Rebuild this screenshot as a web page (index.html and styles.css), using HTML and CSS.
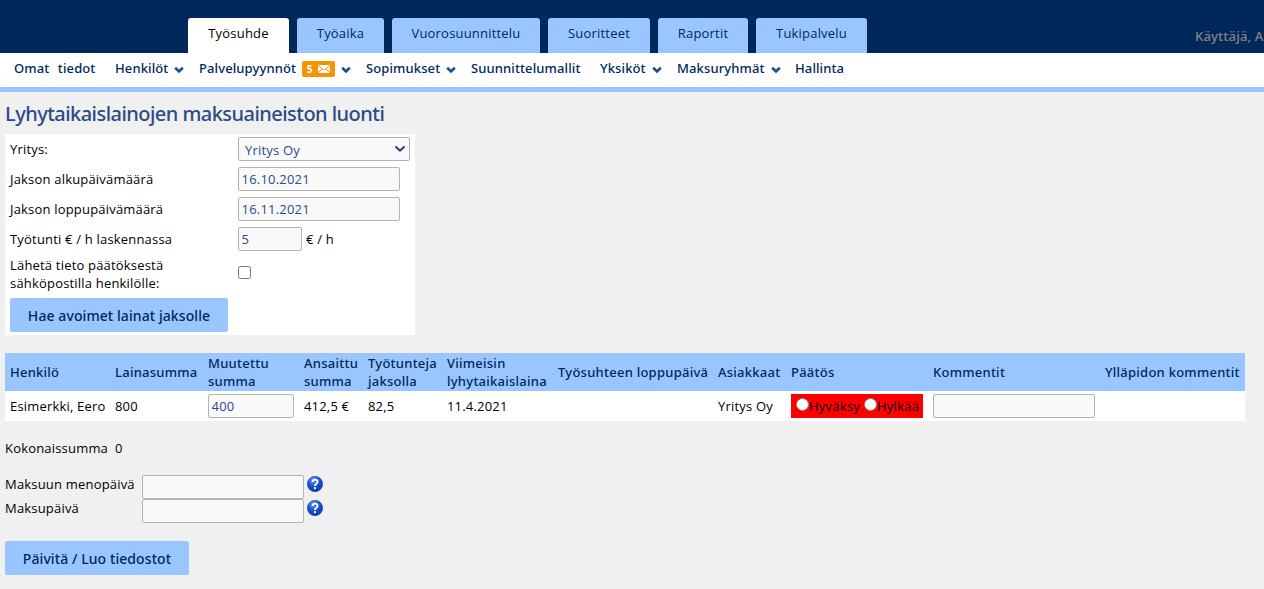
FILE: index.html
```html
<!DOCTYPE html>
<html lang="fi">
<head>
<meta charset="utf-8">
<title>Lyhytaikaislainojen maksuaineiston luonti</title>
<link rel="stylesheet" href="styles.css">
</head>
<body>
<svg class="defs" width="0" height="0">
  <symbol id="chev" viewBox="0 0 10 8"><path d="M1.2 1.800 5 5.500 8.800 1.800" fill="none" stroke="#1d4e89" stroke-width="2.6"/></symbol>
  <radialGradient id="ball" cx=".4" cy=".25" r=".8"><stop offset="0" stop-color="#6f9df0"/><stop offset=".45" stop-color="#1c55d6"/><stop offset="1" stop-color="#0537a8"/></radialGradient>
  <symbol id="help" viewBox="0 0 16 16"><circle cx="8" cy="8" r="7.7" fill="url(#ball)" stroke="#1746ab" stroke-width=".6"/><path d="M5.4 6.1C5.4 2.7 10.8 2.9 10.6 6 10.5 7.8 8 7.8 8 10" fill="none" stroke="#fff" stroke-width="1.9"/><circle cx="8" cy="12.2" r="1.15" fill="#fff"/></symbol>
</svg>
<header class="top">
  <nav class="tabs">
    <a class="tab active">Työsuhde</a><a class="tab t2">Työaika</a><a class="tab t3">Vuorosuunnittelu</a><a class="tab t4">Suoritteet</a><a class="tab t5">Raportit</a><a class="tab t6">Tukipalvelu</a>
  </nav>
  <div class="user">Käyttäjä, A</div>
</header>
<nav class="menu">
  <a class="own">Omat tiedot</a>
  <a>Henkilöt<svg class="chev"><use href="#chev"/></svg></a>
  <a>Palvelupyynnöt<span class="badge">5<svg width="12" height="8" viewBox="0 0 12 8"><path d="M0 0H12V8H0Z" fill="#fff"/><path d="M0 .4 6 5 12 .4M0 7.8 4 4M12 7.8 8 4" fill="none" stroke="#f59300" stroke-width="1"/></svg></span><svg class="chev"><use href="#chev"/></svg></a>
  <a>Sopimukset<svg class="chev"><use href="#chev"/></svg></a>
  <a>Suunnittelumallit</a>
  <a>Yksiköt<svg class="chev"><use href="#chev"/></svg></a>
  <a>Maksuryhmät<svg class="chev"><use href="#chev"/></svg></a>
  <a>Hallinta</a>
</nav>
<main>
  <h1>Lyhytaikaislainojen maksuaineiston luonti</h1>
  <form class="panel">
    <div class="row"><label>Yritys:</label><div class="field select">Yritys Oy<svg width="12" height="8" viewBox="0 0 12 8"><path d="M1.5 1.5 6 5.7 10.500 1.5" fill="none" stroke="#1f4179" stroke-width="2"/></svg></div></div>
    <div class="row"><label>Jakson alkupäivämäärä</label><input class="field" value="16.10.2021"></div>
    <div class="row"><label>Jakson loppupäivämäärä</label><input class="field" value="16.11.2021"></div>
    <div class="row"><label>Työtunti € / h laskennassa</label><input class="field rate" value="5"><span class="unit">€ / h</span></div>
    <div class="row tall"><label>Lähetä tieto päätöksestä sähköpostilla henkilölle:</label><input type="checkbox"></div>
    <button type="button" class="btn fetch">Hae avoimet lainat jaksolle</button>
  </form>
  <table>
    <colgroup><col class="c1"><col class="c2"><col class="c3"><col class="c4"><col class="c5"><col class="c6"><col class="c7"><col class="c8"><col class="c9"><col class="c10"><col class="c11"></colgroup>
    <thead><tr><th>Henkilö</th><th>Lainasumma</th><th>Muutettu<br>summa</th><th>Ansaittu<br>summa</th><th>Työtunteja<br>jaksolla</th><th>Viimeisin<br>lyhytaikaislaina</th><th>Työsuhteen loppupäivä</th><th>Asiakkaat</th><th>Päätös</th><th>Kommentit</th><th>Ylläpidon kommentit</th></tr></thead>
    <tbody><tr><td>Esimerkki, Eero</td><td>800</td><td><input class="field sum" value="400"></td><td>412,5 €</td><td>82,5</td><td>11.4.2021</td><td></td><td>Yritys Oy</td><td><div class="decision"><i class="radio"></i><span class="yes">Hyväksy</span><i class="radio"></i><span>Hylkää</span></div></td><td><input class="field"></td><td></td></tr></tbody>
  </table>
  <div class="total"><span>Kokonaissumma</span><span>0</span></div>
  <div class="dates">
    <div class="date"><label>Maksuun menopäivä</label><input class="field"><svg class="help"><use href="#help"/></svg></div>
    <div class="date"><label>Maksupäivä</label><input class="field"><svg class="help"><use href="#help"/></svg></div>
  </div>
  <button type="button" class="btn save">Päivitä / Luo tiedostot</button>
</main>
</body>
</html>
```
FILE: styles.css
```css
* { box-sizing: border-box; }
body { margin: 0; height: 589px; overflow: hidden; background: #f0f0f0; color: #000; font: 13px/18px "Open Sans", "Noto Sans", sans-serif; letter-spacing: .19px; }
.defs { display: block; height: 0; }
.top { height: 53px; background: #00285a; display: flex; padding: 18px 0 0 188px; overflow: hidden; }
.tabs { display: flex; gap: 8px; width: 1007px; flex: none; }
.tab { height: 35px; width: 101px; background: #9ac6ff; color: #00285a; border-radius: 3px 3px 0 0; text-align: center; line-height: 31px; white-space: nowrap; letter-spacing: .2px; }
.active { background: #fff; color: #000; }
.t2 { width: 87px; }
.t3 { width: 148px; }
.t4 { width: 102px; }
.t5 { width: 90px; }
.t6 { width: 111px; }
.user { color: #808080; font-weight: 600; line-height: 37px; white-space: nowrap; letter-spacing: .1px; }
.menu { height: 39px; background: #fff; border-bottom: 5px solid #9ac6ff; display: grid; grid-template-columns: 101px 84px 167px 105px 129px 77px 118px 100px; padding-left: 14px; color: #00285a; font-family: "Noto Sans", "Open Sans", sans-serif; font-weight: 500; line-height: 31px; letter-spacing: .11px; }
.menu a { display: flex; white-space: nowrap; }
.own { word-spacing: 5px; }
.chev { width: 10px; height: 8px; margin: 13px 0 0 6px; }
.badge { width: 33px; height: 16px; margin: 8px 0 0 5.5px; background: #f59300; color: #fff; border-radius: 2px; font-size: 10px; font-weight: 700; line-height: 17px; display: flex; align-items: center; gap: 5px; padding-left: 5px; }
main { padding: 11px 0 0 5px; }
h1 { margin: 0; height: 31px; font-family: "Noto Sans", "Open Sans", sans-serif; font-size: 20px; line-height: 21px; font-weight: 500; color: #2a4b87; letter-spacing: -.54px; white-space: nowrap; }
.panel { width: 410px; height: 201px; background: #fff; padding: 0 5px; }
.row { height: 30px; display: flex; align-items: center; }
.row label { width: 228px; padding-right: 50px; flex: none; }
.tall { height: 44px; padding-bottom: 4px; }
.tall + .btn { display: block; }
.row input[type=checkbox] { width: 13px; height: 13px; margin: 0 0 4px; }
.field { display: block; width: 162px; height: 24px; padding: 0 3px 1px 2.5px; border: 1px solid #b3b3b3; border-radius: 2px; background: #f9f9f9; color: #2a4b87; font: inherit; letter-spacing: .2px; }
.select { width: 172px; padding: 3px 3px 0 6px; display: flex; justify-content: space-between; }
.select svg { margin-top: 4px; }
.rate { width: 64px; }
.unit { margin-left: 4px; }
.btn { border: 0; border-radius: 2px; background: #9ac6ff; color: #00285a; height: 34px; padding: 1px 0 0; font: 500 14px "Noto Sans", "Open Sans", sans-serif; letter-spacing: .08px; text-align: center; white-space: nowrap; }
.fetch { width: 218px; }
.save { display: block; width: 184px; margin-top: 18px; }
table { width: 1240px; margin-top: 18px; border-collapse: collapse; table-layout: fixed; background: #fff; }
th { height: 38px; padding: 0 0 0 5px; background: #9ac6ff; color: #00285a; font-family: "Noto Sans", "Open Sans", sans-serif; font-weight: 500; letter-spacing: .25px; text-align: left; white-space: nowrap; }
td { height: 30px; padding: 0 0 0 5px; white-space: nowrap; }
.c1 { width: 105px; }
.c2 { width: 93px; }
.c3 { width: 96px; }
.c4 { width: 64px; }
.c5 { width: 79px; }
.c6 { width: 111px; }
.c7 { width: 160px; }
.c8 { width: 73px; }
.c9 { width: 142px; }
.c10 { width: 172px; }
.c11 { width: 145px; }
.sum { width: 86px; }
.decision { width: 132px; height: 24px; background: #f00; display: flex; align-items: center; padding-left: 5px; letter-spacing: .25px; }
.radio { width: 13px; height: 13px; flex: none; border: 1px solid #858585; border-radius: 50%; background: #fff; margin-bottom: 3px; }
.yes { width: 55px; }
.total { display: flex; margin-top: 18px; }
.total span:first-child { width: 110px; }
.dates { margin-top: 18px; }
.date { height: 24px; display: flex; }
.date label { width: 137px; }
.help { width: 16px; height: 16px; margin: 1px 0 0 3px; }
```
